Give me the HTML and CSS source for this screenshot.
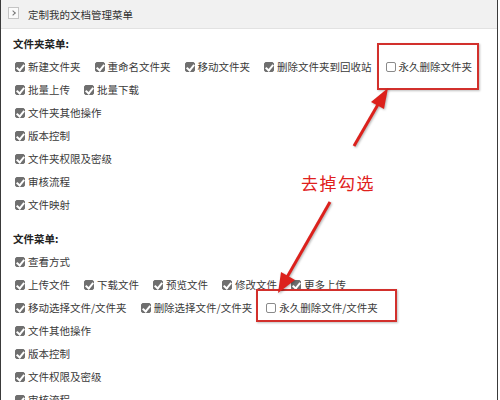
FILE: index.html
```html
<!DOCTYPE html>
<html lang="zh-CN">
<head>
    <meta charset="UTF-8">
    <title>定制我的文档管理菜单</title>
    <link rel="stylesheet" href="styles.css">
</head>
<body>
    <div class="panel">
        <div class="head">
            <span class="head-icon"></span>
            <span class="head-title">定制我的文档管理菜单</span>
        </div>

        <div class="content">
            <!-- folder menu -->
            <div class="group-title">文件夹菜单:</div>
            <div class="row">
                <label class="opt"><span class="cb on"></span>新建文件夹</label>
                <label class="opt"><span class="cb on"></span>重命名文件夹</label>
                <label class="opt"><span class="cb on"></span>移动文件夹</label>
                <label class="opt"><span class="cb on"></span>删除文件夹到回收站</label>
                <label class="opt marked marked-a"><span class="cb"></span>永久删除文件夹</label>
            </div>
            <div class="row">
                <label class="opt"><span class="cb on"></span>批量上传</label>
                <label class="opt"><span class="cb on"></span>批量下载</label>
            </div>
            <div class="row"><label class="opt"><span class="cb on"></span>文件夹其他操作</label></div>
            <div class="row"><label class="opt"><span class="cb on"></span>版本控制</label></div>
            <div class="row"><label class="opt"><span class="cb on"></span>文件夹权限及密级</label></div>
            <div class="row"><label class="opt"><span class="cb on"></span>审核流程</label></div>
            <div class="row"><label class="opt"><span class="cb on"></span>文件映射</label></div>

            <!-- file menu -->
            <div class="group-title second">文件菜单:</div>
            <div class="row"><label class="opt"><span class="cb on"></span>查看方式</label></div>
            <div class="row">
                <label class="opt"><span class="cb on"></span>上传文件</label>
                <label class="opt"><span class="cb on"></span>下载文件</label>
                <label class="opt"><span class="cb on"></span>预览文件</label>
                <label class="opt"><span class="cb on"></span>修改文件</label>
                <label class="opt"><span class="cb on"></span>更多上传</label>
            </div>
            <div class="row">
                <label class="opt"><span class="cb on"></span>移动选择文件/文件夹</label>
                <label class="opt"><span class="cb on"></span>删除选择文件/文件夹</label>
                <label class="opt marked marked-b"><span class="cb"></span>永久删除文件/文件夹</label>
            </div>
            <div class="row"><label class="opt"><span class="cb on"></span>文件其他操作</label></div>
            <div class="row"><label class="opt"><span class="cb on"></span>版本控制</label></div>
            <div class="row"><label class="opt"><span class="cb on"></span>文件权限及密级</label></div>
            <div class="row"><label class="opt"><span class="cb on"></span>审核流程</label></div>
        </div>

        <!-- annotation drawn over the screenshot -->
        <div class="note">去掉勾选</div>
        <svg class="arrows" width="500" height="400" viewBox="0 0 500 400">
            <line x1="354" y1="146" x2="380" y2="101" />
            <polygon points="388,88 384,109 371,102" />
            <line x1="330" y1="202" x2="286" y2="279" />
            <polygon points="278,293 281,272 295,280" />
        </svg>
    </div>
</body>
</html>
```

FILE: styles.css
```css
* {
    margin: 0;
    padding: 0;
    box-sizing: border-box;
}

body {
    background-color: #fff;
    font-family: "Noto Sans CJK SC", "Noto Sans", sans-serif;
    font-size: 10.5px;
    color: #333;
    overflow: hidden;
}

.panel {
    position: relative;
    width: 498px;
    height: 400px;
    border-left: 1px solid #3a3a3a;
    border-right: 1px solid #3a3a3a;
    overflow: hidden;
}

.head {
    height: 29px;
    display: flex;
    align-items: center;
    gap: 9px;
    padding-left: 7px;
    background-color: #f1f1f1;
    border-bottom: 1px solid #e2e2e2;
}

.head-icon {
    position: relative;
    width: 11px;
    height: 12px;
    border: 1px solid #c4c4c4;
    background-color: #fafafa;
    margin-top: -2px;
}

.head-icon::after {
    content: "";
    position: absolute;
    left: 2px;
    top: 3px;
    width: 3px;
    height: 3px;
    border-right: 1px solid #777;
    border-top: 1px solid #777;
    transform: rotate(45deg);
}

.head-title {
    color: #333;
    font-size: 10.5px;
}

.content {
    padding: 0 14px 0 12px;
}

.group-title {
    height: 22px;
    line-height: 22px;
    margin-top: 4px;
    font-weight: bold;
    color: #222;
}

.group-title.second {
    margin-top: 12px;
}

.row {
    height: 23px;
    display: flex;
    align-items: center;
    padding-left: 2px;
}

.opt {
    position: relative;
    display: flex;
    align-items: center;
    gap: 3px;
    margin-right: 14px;
    white-space: nowrap;
    color: #3a3a3a;
}

.cb {
    position: relative;
    width: 10px;
    height: 10px;
    border: 1px solid #8a8a8a;
    border-radius: 2px;
    background-color: #fff;
}

.cb.on {
    background-color: #6f6f6f;
    border-color: #6f6f6f;
}

.cb.on::after {
    content: "";
    position: absolute;
    left: 2px;
    top: 0;
    width: 3px;
    height: 6px;
    border-right: 2px solid #fff;
    border-bottom: 2px solid #fff;
    transform: rotate(40deg);
}

/* red highlight boxes */
.marked::before {
    content: "";
    position: absolute;
    border: 2px solid #d2302c;
    box-shadow: 1px 1px 2px rgba(0, 0, 0, 0.25);
}

.marked-a::before {
    left: -9px;
    right: -7px;
    top: -16px;
    bottom: -16px;
}

.marked-b::before {
    left: -10px;
    right: -19px;
    top: -11px;
    bottom: -7px;
}

.note {
    position: absolute;
    left: 300px;
    top: 170px;
    font-size: 17px;
    letter-spacing: 1.5px;
    color: #e0211d;
}

.arrows {
    position: absolute;
    left: -1px;
    top: 0;
    pointer-events: none;
    filter: drop-shadow(1px 1px 1px rgba(0, 0, 0, 0.3));
}

.arrows line {
    stroke: #dc211c;
    stroke-width: 3;
}

.arrows polygon {
    fill: #dc211c;
}
```
